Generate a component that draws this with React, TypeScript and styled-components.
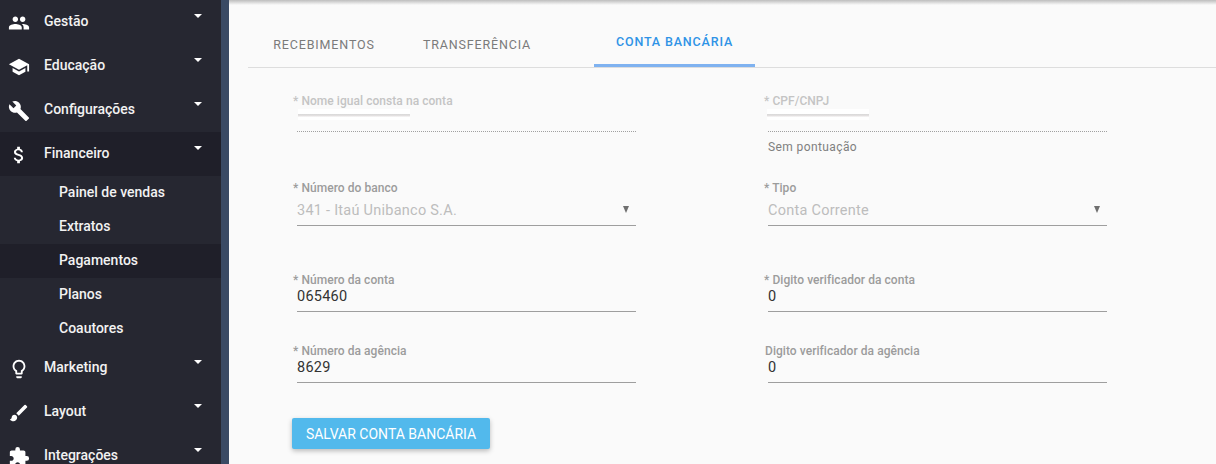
import React from 'react'
import styled, { createGlobalStyle } from 'styled-components'
import {
  MdPeople,
  MdSchool,
  MdBuild,
  MdAttachMoney,
  MdLightbulbOutline,
  MdBrush,
  MdExtension,
} from 'react-icons/md'

const GlobalStyle = createGlobalStyle`
  html, body { margin: 0; padding: 0; background: #fafafa; }
  body { font-family: Roboto, "Liberation Sans", sans-serif; }
  * { box-sizing: border-box; }
`

const Shell = styled.div`
  display: flex;
  width: 1216px;
  height: 464px;
  overflow: hidden;
`

const Sidebar = styled.nav`
  flex: 0 0 221px;
  background: #262731;
  height: 464px;
`

const SideStrip = styled.div`
  flex: 0 0 8px;
  background: #3a4a64;
`

const MenuRow = styled.div<{ $active?: boolean }>`
  display: flex;
  align-items: center;
  height: 44px;
  padding: 0 0 2px 8px;
  background: ${(p) => (p.$active ? '#1f1f29' : 'transparent')};
  color: #f2f2f2;
  font-size: 14px;
  font-weight: 500;
`

const IconSlot = styled.span`
  display: flex;
  justify-content: center;
  width: 22px;
  margin: 4px 14px 0 0;
  font-size: 22px;
  color: #fff;
`

const Caret = styled.span`
  margin-left: auto;
  margin-right: 19px;
  margin-top: -10px;
  width: 0;
  height: 0;
  border-left: 4.5px solid transparent;
  border-right: 4.5px solid transparent;
  border-top: 4.5px solid #fff;
`

const SubRow = styled.div<{ $active?: boolean }>`
  display: flex;
  align-items: center;
  height: 34px;
  padding: 0 0 2px 59px;
  background: ${(p) => (p.$active ? '#1f1f29' : 'transparent')};
  color: #f2f2f2;
  font-size: 14px;
  font-weight: 500;
`

const Main = styled.main`
  position: relative;
  flex: 1;
  padding: 22px 0 0 19px;
  background: #fafafa;
`

const TopShadow = styled.div`
  position: absolute;
  top: 0;
  left: 0;
  right: 0;
  height: 5px;
  background: linear-gradient(#bdbdbd, #fafafa);
`

const Tabs = styled.div`
  display: flex;
  height: 46px;
  border-bottom: 1px solid #ddd;
`

const Tab = styled.div<{ $active?: boolean; $width: number; $after?: number }>`
  display: flex;
  align-items: center;
  justify-content: center;
  width: ${(p) => p.$width}px;
  height: 45px;
  margin-right: ${(p) => p.$after ?? 0}px;
  padding-bottom: ${(p) => (p.$active ? '3px' : '0')};
  border-bottom: ${(p) => (p.$active ? '3px solid #7fb2f0' : '0')};
  color: ${(p) => (p.$active ? '#2f93e6' : '#7a7a7a')};
  font-size: 12.5px;
  font-weight: ${(p) => (p.$active ? 500 : 400)};
  letter-spacing: 0.85px;
`

const Form = styled.div`
  display: grid;
  grid-template-columns: 343px 343px;
  grid-template-rows: 87px 92px 71px 71px;
  column-gap: 128px;
  padding: 26px 0 0 45px;
`

const Field = styled.div`
  display: flex;
  flex-direction: column;
`

const Label = styled.label<{ $disabled?: boolean; $shift?: number }>`
  height: 14px;
  line-height: 14px;
  color: ${(p) => (p.$disabled ? '#c4c4c4' : '#9c9c9c')};
  font-size: 12px;
  font-weight: 500;
  letter-spacing: 0.05px;
  margin-left: ${(p) => p.$shift ?? 0}px;
`

const ValueLine = styled.div<{ $height: number; $lift: number }>`
  display: flex;
  align-items: center;
  justify-content: space-between;
  height: ${(p) => p.$height}px;
  margin-left: 4px;
  border-bottom: 1px solid #9e9e9e;
  padding-bottom: ${(p) => p.$lift}px;
`

const Value = styled.span<{ $disabled?: boolean }>`
  color: ${(p) => (p.$disabled ? '#bdbdbd' : '#333')};
  font-size: 14.5px;
  letter-spacing: 0.25px;
`

const SelectArrow = styled.span`
  margin-right: 7px;
  margin-bottom: 2px;
  width: 0;
  height: 0;
  border-left: 3.5px solid transparent;
  border-right: 3.5px solid transparent;
  border-top: 7px solid #6f6f6f;
`

const Redacted = styled.div<{ $width: number; $inset: number }>`
  width: ${(p) => p.$width}px;
  height: 11px;
  margin: 1px 0 11px ${(p) => p.$inset}px;
  background: linear-gradient(#fff 5px, #d8d8d8 5px, #e6e2e2 7px, #fff 8px);
`

const DottedLine = styled.div`
  margin-left: 4px;
  border-bottom: 1px dotted #a0a0a0;
`

const Hint = styled.div`
  margin: 8px 0 0 4px;
  color: #808080;
  font-size: 12px;
  letter-spacing: 0.4px;
`

const SaveButton = styled.button`
  display: block;
  width: 198px;
  height: 31px;
  margin: 3px 0 0 44px;
  padding: 0;
  border: 0;
  border-radius: 2px;
  background: #52b9ec;
  box-shadow: 0 2px 5px rgba(0, 0, 0, 0.26);
  color: #fff;
  font-family: inherit;
  font-size: 14px;
  font-weight: 400;
`

const topMenu = [
  { label: 'Gestão', icon: <MdPeople /> },
  { label: 'Educação', icon: <MdSchool /> },
  { label: 'Configurações', icon: <MdBuild /> },
]

const subMenu = ['Painel de vendas', 'Extratos', 'Pagamentos', 'Planos', 'Coautores']

const bottomMenu = [
  { label: 'Marketing', icon: <MdLightbulbOutline /> },
  { label: 'Layout', icon: <MdBrush /> },
  { label: 'Integrações', icon: <MdExtension /> },
]

const MenuItem = ({ item, active }: { item: { label: string; icon: React.ReactNode }; active?: boolean }) => (
  <MenuRow $active={active}>
    <IconSlot>{item.icon}</IconSlot>
    {item.label}
    <Caret />
  </MenuRow>
)

export default function App() {
  return (
    <Shell>
      <GlobalStyle />
      <Sidebar>
        {topMenu.map((item) => (
          <MenuItem key={item.label} item={item} />
        ))}
        <MenuItem item={{ label: 'Financeiro', icon: <MdAttachMoney /> }} active />
        {subMenu.map((label) => (
          <SubRow key={label} $active={label === 'Pagamentos'}>
            {label}
          </SubRow>
        ))}
        {bottomMenu.map((item) => (
          <MenuItem key={item.label} item={item} />
        ))}
      </Sidebar>
      <SideStrip />
      <Main>
        <TopShadow />
        <Tabs>
          <Tab $width={152}>RECEBIMENTOS</Tab>
          <Tab $width={154} $after={40}>
            TRANSFERÊNCIA
          </Tab>
          <Tab $width={161} $active>
            CONTA BANCÁRIA
          </Tab>
        </Tabs>
        <Form>
          <Field>
            <Label $disabled>* Nome igual consta na conta</Label>
            <Redacted $width={112} $inset={5} />
            <DottedLine />
          </Field>
          <Field>
            <Label $disabled>* CPF/CNPJ</Label>
            <Redacted $width={102} $inset={3} />
            <DottedLine />
            <Hint>Sem pontuação</Hint>
          </Field>
          <Field>
            <Label>* Número do banco</Label>
            <ValueLine $height={31} $lift={0}>
              <Value $disabled>341 - Itaú Unibanco S.A.</Value>
              <SelectArrow />
            </ValueLine>
          </Field>
          <Field>
            <Label>* Tipo</Label>
            <ValueLine $height={31} $lift={0}>
              <Value $disabled>Conta Corrente</Value>
              <SelectArrow />
            </ValueLine>
          </Field>
          <Field>
            <Label>* Número da conta</Label>
            <ValueLine $height={25} $lift={5}>
              <Value>065460</Value>
            </ValueLine>
          </Field>
          <Field>
            <Label>* Digito verificador da conta</Label>
            <ValueLine $height={25} $lift={5}>
              <Value>0</Value>
            </ValueLine>
          </Field>
          <Field>
            <Label>* Número da agência</Label>
            <ValueLine $height={25} $lift={5}>
              <Value>8629</Value>
            </ValueLine>
          </Field>
          <Field>
            <Label $shift={1}>Digito verificador da agência</Label>
            <ValueLine $height={25} $lift={5}>
              <Value>0</Value>
            </ValueLine>
          </Field>
        </Form>
        <SaveButton>SALVAR CONTA BANCÁRIA</SaveButton>
      </Main>
    </Shell>
  )
}
